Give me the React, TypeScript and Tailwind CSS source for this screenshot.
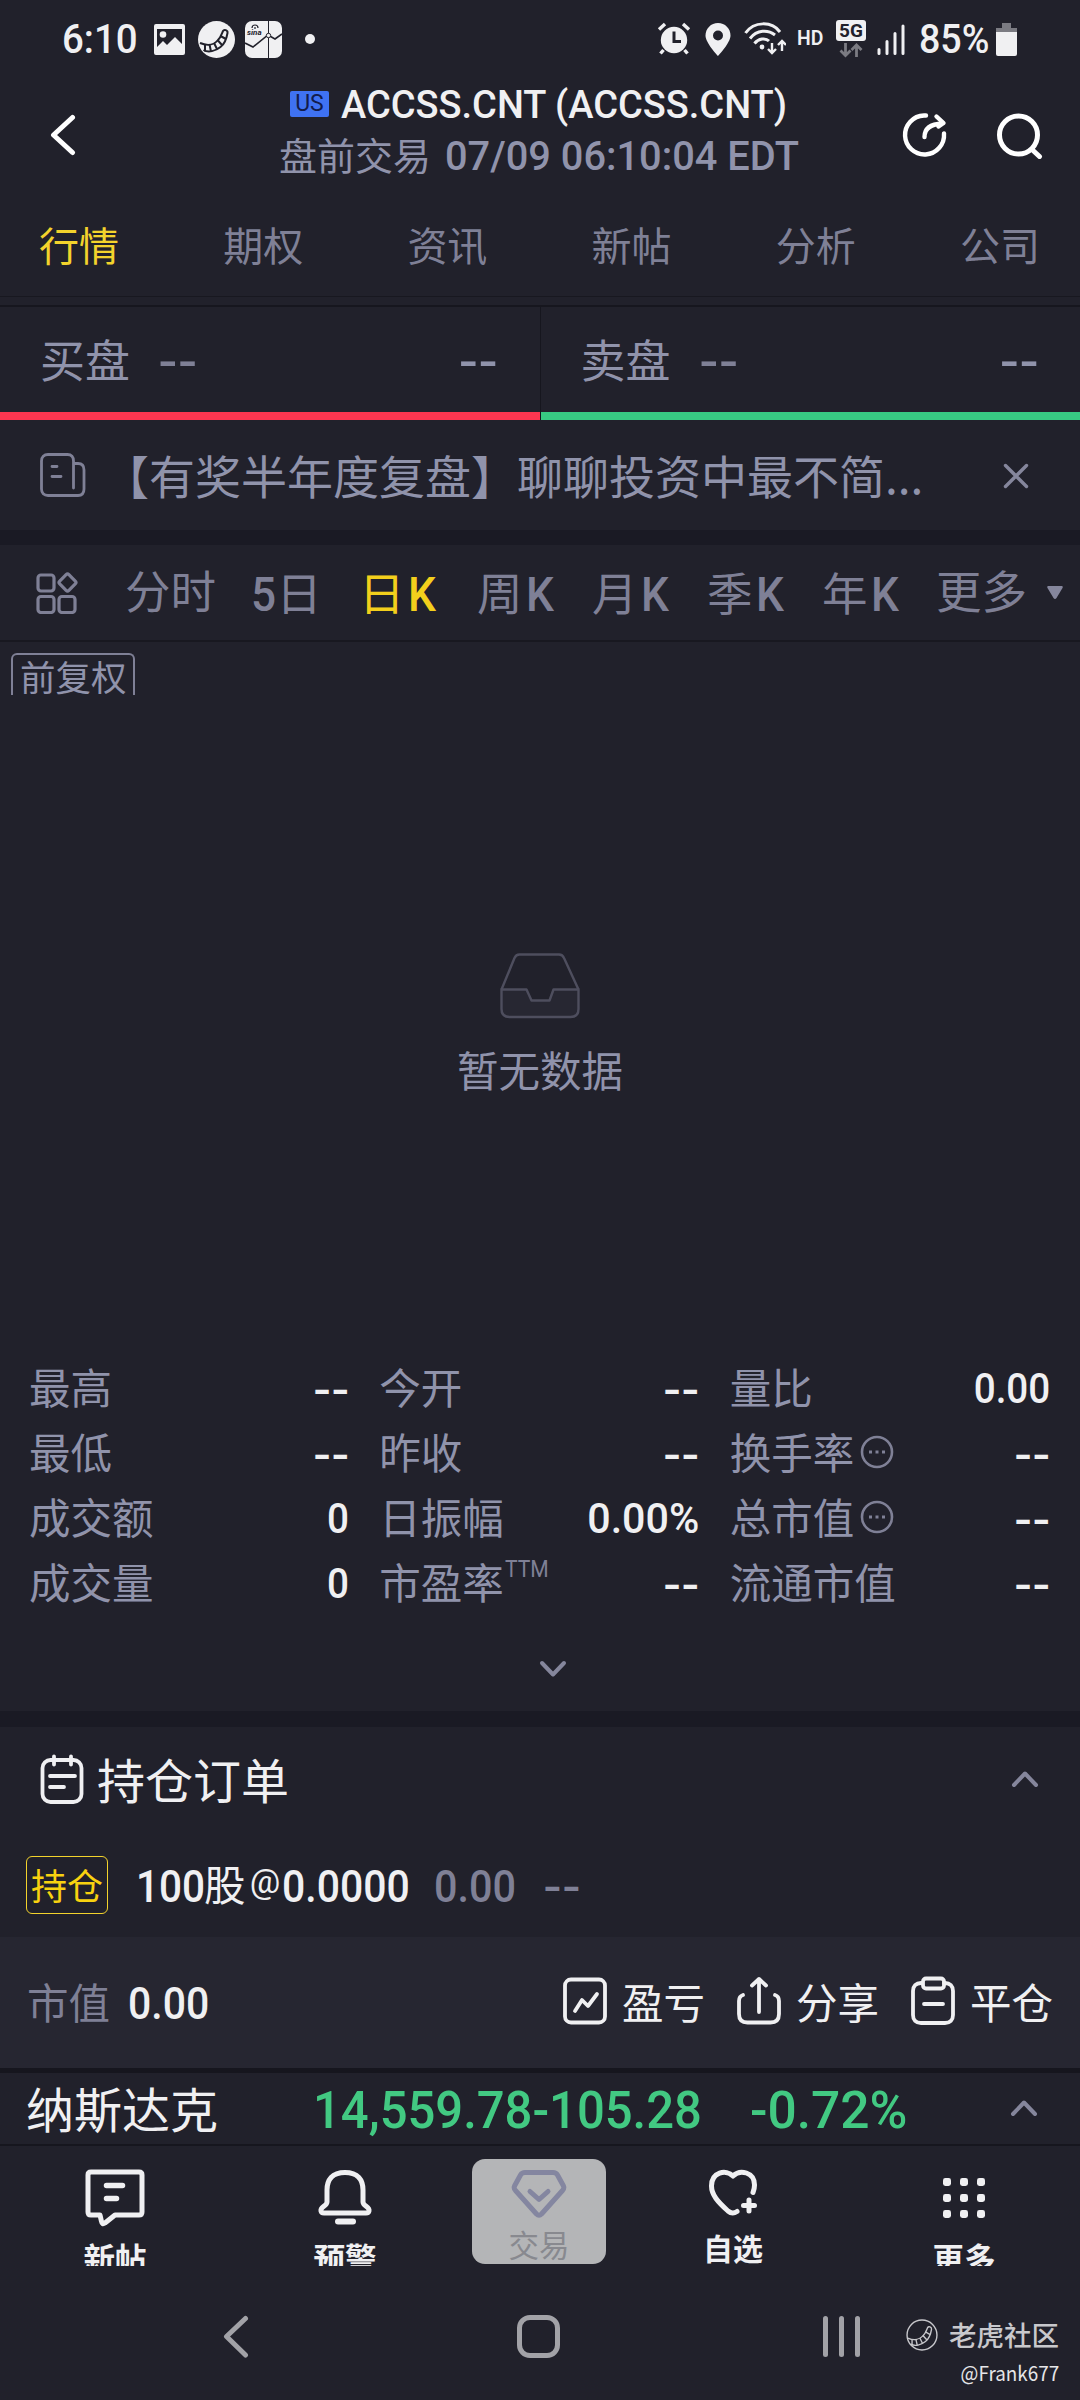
import type { ReactNode } from "react";
import clsx from "clsx";

const NUM =
  "inline-block origin-left whitespace-nowrap font-['Roboto','Noto_Sans_CJK_SC',sans-serif] font-medium leading-none";

function Caret({ down, className }: { down?: boolean; className?: string }) {
  return (
    <svg
      viewBox="0 0 28 18"
      className={clsx("h-[18px] w-[28px] shrink-0", down && "rotate-180", className)}
      fill="none"
      stroke="#85869c"
      strokeWidth="4"
      strokeLinecap="round"
      strokeLinejoin="round"
    >
      <path d="M3 15 14 3.500 25 15" />
    </svg>
  );
}

/** Two short bars used wherever a quote value is missing. */
function Dashes({ className }: { className?: string }) {
  return (
    <span
      className={clsx(
        "inline-block scale-x-[1.2] font-['Roboto',sans-serif] font-semibold leading-none",
        className,
      )}
    >
      --
    </span>
  );
}

function TigerPaw({ stroke, width }: { stroke: string; width: number }) {
  return (
    <g fill="none" stroke={stroke} strokeWidth={width} strokeLinejoin="round">
      <path d="M2 22c7 3 14 2 18-3 3-3 4-7 5-9 1-2 5-1 4.500 2-1 6-3 11-7 14-5 4-12 6-17 3" />
      <path d="M7 23.500v7M11.500 23.500l1.500 7M16 22l3 6M19.500 19l4.500 5M22.500 15l5.500 3" />
    </g>
  );
}

function StatusBar() {
  return (
    <div className="flex h-[78px] items-center pl-[62px] text-[#f0f0f2]">
      <span className="mt-[2px] w-[92px] origin-left scale-x-[0.96] font-['Roboto'] text-[40px] font-medium leading-none">
        6:10
      </span>
      <svg viewBox="0 0 31 31" className="h-[31px] w-[31px]">
        <path
          fill="#f0f0f2"
          fillRule="evenodd"
          d="M2 0h27a2 2 0 0 1 2 2v27a2 2 0 0 1-2 2H2a2 2 0 0 1-2-2V2a2 2 0 0 1 2-2zM3 5v18l6-6 4 4 8-8 7 7V5z"
        />
        <circle cx="9" cy="10.500" r="3.300" fill="#f0f0f2" />
      </svg>
      <svg viewBox="0 0 37 37" className="ml-[13px] h-[37px] w-[37px]">
        <circle cx="18.500" cy="18.500" r="18.500" fill="#f0f0f2" />
        <TigerPaw stroke="#21212b" width={2} />
      </svg>
      <svg viewBox="0 0 37 37" className="ml-[10px] h-[37px] w-[37px]">
        <rect width="37" height="37" rx="7" fill="#f0f0f2" />
        <path d="M23.500 0v37" stroke="#21212b" strokeWidth="1" />
        <path d="m0 22 8 4 15-12 7 4 7-5" fill="none" stroke="#21212b" strokeWidth="1.600" />
        <circle cx="23.500" cy="14.500" r="2.200" fill="#f0f0f2" stroke="#21212b" />
        <path d="M7 7c0-4 6-4 6 0M10 6v2" fill="none" stroke="#21212b" strokeWidth="1.200" />
        <text x="2" y="13.500" fontSize="8" fontStyle="italic" fontWeight="700" fontFamily="Roboto" fill="#21212b">
          sina
        </text>
      </svg>
      <span className="ml-[23px] h-[10px] w-[10px] rounded-full bg-[#f0f0f2]" />

      <svg viewBox="0 0 34 34" className="ml-[342px] h-[34px] w-[34px]">
        <circle cx="17" cy="18" r="13.200" fill="#f0f0f2" />
        <path
          d="M2 7.500 8 2M32 7.500 26 2M6.500 28 3.500 31.500M27.500 28l3 3.500"
          stroke="#f0f0f2"
          strokeWidth="3.400"
        />
        <path d="M17 9.500v10h7" fill="none" stroke="#21212b" strokeWidth="3" />
      </svg>
      <svg viewBox="0 0 26 33" className="ml-[14px] h-[33px] w-[26px]">
        <path
          fill="#f0f0f2"
          fillRule="evenodd"
          d="M13 0c7 0 12.500 5.500 12.500 12.500C25.500 20 13 33 13 33S.5 20 .5 12.500C.5 5.500 6 0 13 0zm0 7.500a5 5 0 1 0 0 10 5 5 0 0 0 0-10z"
        />
      </svg>
      <svg viewBox="0 0 42 34" className="ml-[13px] h-[34px] w-[42px]" fill="none" stroke="#f0f0f2">
        <path d="M1.500 11C10-1 28-1 36 10M6 16.500C13 7.500 24 7.500 31 13M10.500 21.500c4-5 11-6 14.500-2.500" strokeWidth="3" />
        <circle cx="18" cy="25" r="2.400" fill="#f0f0f2" stroke="none" />
        <path d="M28 21v10m-4-4 4 4 4-4M38 29V19m-4 4 4-4 4 4" strokeWidth="2.400" />
      </svg>
      <span className="-mt-[2px] ml-[11px] w-[27px] origin-left scale-x-[0.97] font-['Roboto'] text-[20px] font-semibold leading-none">
        HD
      </span>
      <span className="ml-[12px] flex w-[30px] flex-col items-center">
        <span className="flex h-[21px] w-[30px] items-center justify-center rounded-[3px] bg-[#f0f0f2] font-['Roboto'] text-[19px] font-bold leading-none text-[#21212b]">
          5G
        </span>
        <svg viewBox="0 0 24 15" className="mt-[2px] h-[15px] w-[24px]" fill="none" stroke="#7b7b82" strokeWidth="2.800">
          <path d="M6.500 0v12M1.500 7.500l5 5 5-5M17.500 14V2M12.500 7l5-5 5 5" />
        </svg>
      </span>
      <svg viewBox="0 0 28 31" className="ml-[11px] h-[31px] w-[28px]" stroke="#f0f0f2" strokeWidth="3" strokeLinecap="round">
        <path d="M2 25.500v4M10 17.500v12M18 9.500v20M26 2v27.500" />
      </svg>
      <span className="ml-[14px] mt-[2px] w-[76px] origin-left scale-x-[0.94] whitespace-nowrap font-['Roboto'] text-[40px] font-medium leading-none">
        85%
      </span>
      <svg viewBox="0 0 21 33" className="ml-px h-[33px] w-[21px]">
        <path d="M6 0h9v5h6v4H0V5h6z" fill="#7b7b82" />
        <path d="M0 9h21v22a2 2 0 0 1-2 2H2a2 2 0 0 1-2-2z" fill="#f0f0f2" />
      </svg>
    </div>
  );
}

function Header() {
  return (
    <header className="flex h-[117px] items-start pl-[49px]">
      <svg
        viewBox="0 0 28 42"
        className="mt-[36px] h-[42px] w-[28px]"
        fill="none"
        stroke="#fff"
        strokeWidth="5"
        strokeLinecap="round"
        strokeLinejoin="round"
      >
        <path d="M23.500 3.500 4.500 21l19 17.500" />
      </svg>
      <div className="ml-[202px] flex w-[622px] flex-col">
        <div className="ml-[11px] mt-[5px] flex h-[44px] items-center">
          <span className="-mt-[3px] flex h-[26px] w-[39px] items-center justify-center rounded-[2px] bg-[#3f72f2] font-['Roboto'] text-[23px] leading-none text-[#121c4c]">
            US
          </span>
          <span className="ml-[12px] whitespace-nowrap font-['Roboto'] text-[38px] font-medium leading-none text-[#f0f0f2]">
            ACCSS.CNT (ACCSS.CNT)
          </span>
        </div>
        <div className="flex h-[56px] items-center text-[#9093ab]">
          <span className="-mt-[3px] text-[38px] leading-none">盘前交易</span>
          <span className={clsx(NUM, "ml-[14px] mt-[2px] scale-x-[0.97] text-[41px]")}>07/09 06:10:04 EDT</span>
        </div>
      </div>
      <div className="mt-[33px] flex gap-[46px]">
        <svg viewBox="0 0 48 48" className="h-[48px] w-[48px]" fill="none" stroke="#fff" strokeWidth="4.400" strokeLinecap="round" strokeLinejoin="round">
          <path d="M25 4.500h-2a19.500 19.500 0 1 0 20 18" />
          <path d="M23.500 26c0-8 6-13 18-13.500M35.500 5.500l7 6.500-5 3.500" />
        </svg>
        <svg viewBox="0 0 48 48" className="h-[48px] w-[48px]" fill="none" stroke="#fff" strokeWidth="5" strokeLinecap="round">
          <circle cx="23.500" cy="24" r="19" />
          <path d="m37.500 39 7 6.500" />
        </svg>
      </div>
    </header>
  );
}

const TABS = ["行情", "期权", "资讯", "新帖", "分析", "公司"];

function Tabs() {
  return (
    <nav className="flex h-[102px] items-center justify-between border-b border-[#181820] pb-[4px] pl-[39px] pr-[40px] text-[40px] leading-none text-[#7f8096]">
      {TABS.map((tab, i) => (
        <span key={tab} className={clsx(i === 0 && "text-[#f3d32c]")}>
          {tab}
        </span>
      ))}
    </nav>
  );
}

function BookSide({ label, bar }: { label: string; bar: string }) {
  return (
    <div className="flex flex-1 flex-col">
      <div className="flex h-[105px] items-center pl-[40px] pr-[41px] text-[#9093ab]">
        <span className="-mt-[2px] text-[45px] leading-none">{label}</span>
        <Dashes className="ml-[28px] mt-[3px] origin-left text-[45px] text-[#7f8096]" />
        <Dashes className="ml-auto mt-[3px] origin-right text-[45px]" />
      </div>
      <div className={clsx("h-[8px]", bar)} />
    </div>
  );
}

function Notice() {
  return (
    <div className="flex h-[110px] items-center pl-[40px]">
      <svg viewBox="0 0 46 44" className="h-[44px] w-[46px]" fill="none" stroke="#7f8096" strokeWidth="2.800" strokeLinecap="round" strokeLinejoin="round">
        <path d="M33.500 35V8c0-4-2-6.500-6-6.500H8c-4 0-6.500 2.500-6.500 6.500v28c0 4 2.500 6.500 6.500 6.500h30c4 0 6-2.500 6-6.500V17c0-4-2-6.500-6-6.500h-4" />
        <path d="M12 13.500h5M12 23.500h9" />
      </svg>
      <span className="-mt-[3px] ml-[17px] w-[830px] whitespace-nowrap text-[46px] leading-none text-[#9093ab]">
        【有奖半年度复盘】聊聊投资中最不简...
      </span>
      <svg viewBox="0 0 28 28" className="ml-[69px] mt-[2px] h-[28px] w-[28px]" stroke="#85869c" strokeWidth="3.400" strokeLinecap="round">
        <path d="m3.500 3.500 21 21M24.500 3.500l-21 21" />
      </svg>
    </div>
  );
}

const PERIODS = [
  { label: "分时", width: "w-[126px]" },
  { label: "5日", width: "w-[108px]" },
  { label: "日K", width: "w-[118px]" },
  { label: "周K", width: "w-[115px]" },
  { label: "月K", width: "w-[115px]" },
  { label: "季K", width: "w-[115px]" },
  { label: "年K", width: "w-[114px]" },
  { label: "更多", width: "w-[111px]" },
];

function PeriodBar() {
  return (
    <div className="flex h-[97px] items-center border-b-2 border-[#181820] pl-[36px] text-[#7f8096]">
      <svg viewBox="0 0 42 42" className="h-[42px] w-[42px]" fill="none" stroke="#7f8096" strokeWidth="3.200">
        <rect x="2" y="3" width="16" height="16" rx="3" />
        <rect x="2" y="24.500" width="16" height="16" rx="3" />
        <rect x="23" y="24.500" width="16" height="16" rx="3" />
        <rect x="25" y="4" width="13" height="13" rx="2" transform="rotate(45 31.500 10.500)" />
      </svg>
      <div className="ml-[47px] mt-[4px] flex">
        {PERIODS.map((p) => (
          <span
            key={p.label}
            className={clsx(
              "whitespace-nowrap font-['Roboto','Noto_Sans_CJK_SC',sans-serif] text-[45.500px] leading-none",
              p.width,
              p.label === "日K" && "text-[#f3cf1c]",
            )}
          >
            {[...p.label].map((ch) => (
              <span
                key={ch}
                className={clsx(
                  /[5K]/.test(ch) && "inline-block origin-left scale-x-[0.92] text-[48px] font-medium leading-none",
                  ch === "K" && "ml-[3px]",
                  ch === "5" && "-mr-[2px]",
                )}
              >
                {ch}
              </span>
            ))}
          </span>
        ))}
      </div>
      <svg viewBox="0 0 16 13" className="h-[13px] w-[16px]">
        <path d="M1.500 0h13c1.200 0 1.600 1 1 2L9.500 12c-.8 1.200-2.200 1.200-3 0L.5 2C-.1 1 .3 0 1.500 0z" fill="#85869c" />
      </svg>
    </div>
  );
}

function EmptyChart() {
  return (
    <div className="flex h-[704px] flex-col pt-[11px]">
      <div className="ml-[11px] h-[42px] w-[124px] overflow-hidden rounded-t-[6px] border-2 border-b-0 border-[#7f8096] pl-[7px] pt-[3px] text-[35.500px] leading-[36px] text-[#9093ab]">
        前复权
      </div>
      <div className="mt-[258px] flex flex-col items-center">
        <svg viewBox="0 0 80 66" className="h-[66px] w-[80px]" fill="none" stroke="#4e4e5e" strokeWidth="2.400" strokeLinejoin="round">
          <path d="M1.500 36.500h25l5 11h18l4-11h25V56c0 5-3 8-8 8H9.500c-5 0-8-3-8-8z" fill="#272732" />
          <path d="M1.500 36.500 14.500 5c1-2.500 2-3.500 5-3.500H59c3 0 4 1 5 3.500l14.500 31.500" />
        </svg>
        <span className="mt-[28px] text-[41.500px] leading-[44px] text-[#9093ab]">暂无数据</span>
      </div>
    </div>
  );
}

function MoreDots() {
  return (
    <svg viewBox="0 0 34 34" className="-mt-[3px] ml-[6px] h-[34px] w-[34px]">
      <circle cx="17" cy="17" r="15" fill="none" stroke="#7f8096" strokeWidth="2.600" />
      <path d="M9 15.500h3v3H9zM15.500 15.500h3v3h-3zM22 15.500h3v3h-3z" fill="#7f8096" />
    </svg>
  );
}

type Quote = { label: string; value: string; info?: boolean; sup?: string };

const QUOTES: Quote[] = [
  { label: "最高", value: "--" },
  { label: "今开", value: "--" },
  { label: "量比", value: "0.00" },
  { label: "最低", value: "--" },
  { label: "昨收", value: "--" },
  { label: "换手率", value: "--", info: true },
  { label: "成交额", value: "0" },
  { label: "日振幅", value: "0.00%" },
  { label: "总市值", value: "--", info: true },
  { label: "成交量", value: "0" },
  { label: "市盈率", value: "--", sup: "TTM" },
  { label: "流通市值", value: "--" },
];

function QuoteValue({ value }: { value: string }) {
  if (value === "--") return <Dashes className="mt-[2px] origin-right text-[41.500px]" />;
  return (
    <span
      className={clsx(
        "inline-block origin-right font-['Roboto'] text-[42px] font-medium leading-none",
        value.endsWith("%") ? "scale-x-[0.98]" : "scale-x-[0.92]",
      )}
    >
      {value}
    </span>
  );
}

function QuoteGrid() {
  return (
    <div className="flex h-[365px] flex-col items-center pt-[10px]">
      <dl className="grid w-[1022px] grid-cols-3 gap-x-[29px]">
        {QUOTES.map((q) => (
          <div key={q.label} className="flex h-[65px] items-center">
            <dt className="flex items-center text-[41.500px] leading-none text-[#9093ab]">
              <span className="-mt-[3px]">{q.label}</span>
              {q.info && <MoreDots />}
              {q.sup && (
                <sup className="top-0 -mt-[30px] ml-px origin-left scale-x-[0.88] font-['Roboto'] text-[24px] leading-none text-[#7f8096]">
                  {q.sup}
                </sup>
              )}
            </dt>
            <dd className="ml-auto mr-px flex text-[#f0f0f2]">
              <QuoteValue value={q.value} />
            </dd>
          </div>
        ))}
      </dl>
      <Caret down className="ml-[26px] mt-[44px]" />
    </div>
  );
}

function Action({ label, children }: { label: string; children: ReactNode }) {
  return (
    <span className="flex items-center">
      <svg viewBox="0 0 46 50" className="-mt-[3px] h-[50px] w-[46px]" fill="none" stroke="#f0f0f2" strokeWidth="3.800" strokeLinecap="round" strokeLinejoin="round">
        {children}
      </svg>
      <span className="-mt-[2px] ml-[14px] text-[41.500px] leading-none">{label}</span>
    </span>
  );
}

function Positions() {
  return (
    <section className="text-[#f0f0f2]">
      <div className="flex h-[106px] items-center pl-[40px] pr-[41px]">
        <svg viewBox="0 0 44 50" className="-mt-[3px] h-[50px] w-[44px]" fill="none" stroke="#f0f0f2" strokeWidth="3.800" strokeLinecap="round">
          <rect x="2.500" y="6" width="39" height="42" rx="8" />
          <path d="M14 2.500v8M31 2.500v8M10 22h25M10 33h14" />
        </svg>
        <span className="-mt-[4px] ml-[13px] text-[48px] leading-none">持仓订单</span>
        <Caret className="-mt-[3px] ml-auto" />
      </div>
      <div className="flex h-[104px] items-center pl-[26px]">
        <span className="flex h-[58px] w-[82px] items-center justify-center rounded-[6px] border border-[#f3d32c] pb-[3px] text-[36px] leading-none text-[#f8d210]">
          持仓
        </span>
        <span className={clsx(NUM, "ml-[28px] mt-[2px] w-[68px] scale-x-[0.9] text-[45px]")}>100</span>
        <span className="-mt-[2px] w-[43px] text-[41.500px] leading-none">股</span>
        <span className="-mt-[8px] w-[36px] text-center font-['Roboto'] text-[34px] leading-none">@</span>
        <span className={clsx(NUM, "ml-[-1px] mt-[2px] w-[152px] scale-x-[0.91] text-[45px]")}>0.0000</span>
        <span className={clsx(NUM, "mt-[2px] w-[109px] scale-x-[0.92] text-[45px] text-[#7f8096]")}>0.00</span>
        <Dashes className="mt-[4px] origin-left text-[43px] text-[#7f8096]" />
      </div>
      <div className="flex h-[131px] items-center bg-[#262631] pl-[27px] pr-[27px]">
        <span className="-mt-[2px] text-[41.500px] leading-none text-[#7f8096]">市值</span>
        <span className={clsx(NUM, "ml-[18px] mt-[2px] scale-x-[0.91] text-[45px]")}>0.00</span>
        <div className="ml-auto flex gap-[31px]">
          <Action label="盈亏">
            <rect x="3" y="3.500" width="40" height="43" rx="6" />
            <path d="m13 35 7-11 6 6 9-12" />
          </Action>
          <Action label="分享">
            <path d="M7 19c-3 1-4 3-4 6v13c0 5.500 3 8.500 8.500 8.500h23c5.500 0 8.500-3 8.500-8.500V25c0-3-1-5-4-6M23 36V3M16 9.500 23 3l7 6.500" />
          </Action>
          <Action label="平仓">
            <path d="M12 7h-1c-5 0-8 3-8 8v24c0 5 3 8 8 8h24c5 0 8-3 8-8V15c0-5-3-8-8-8h-1M14 28h19" />
            <rect x="13" y="2.500" width="21" height="10" rx="3" />
          </Action>
        </div>
      </div>
    </section>
  );
}

function IndexTicker() {
  return (
    <div className="flex h-[73px] items-center border-b-2 border-[#16161e] pl-[26px]">
      <span className="-mt-[4px] w-[287px] text-[48px] leading-none text-[#f0f0f2]">纳斯达克</span>
      <span className={clsx(NUM, "mt-[5px] w-[437px] scale-x-[0.942] text-[52px] text-[#42c982]")}>14,559.78-105.28</span>
      <span className={clsx(NUM, "mt-[5px] w-[260px] scale-x-[0.99] text-[52px] text-[#42c982]")}>-0.72%</span>
      <Caret className="-mt-[2px]" />
    </div>
  );
}

function NavItem({ label, className, children }: { label: string; className: string; children: ReactNode }) {
  return (
    <div className={clsx("flex h-[120px] shrink-0 flex-col items-center overflow-hidden pt-[21px]", className)}>
      <svg viewBox="0 0 60 60" className="h-[60px] w-[60px] shrink-0" fill="none" stroke="#f0f0f2" strokeWidth="5" strokeLinecap="round" strokeLinejoin="round">
        {children}
      </svg>
      <span className="mt-[13px] h-[26px] overflow-hidden text-[31.500px] font-bold leading-[34px] text-[#f0f0f2]">{label}</span>
    </div>
  );
}

const DOT_X = [9, 26, 43];
const DOT_Y = [11, 27, 43];

function BottomNav() {
  return (
    <nav className="flex h-[120px]">
      <NavItem label="新帖" className="w-[230px]">
        <path d="M6 5h48q3 0 3 3v37q0 3-3 3H30l-10 8q-3 2-3.500-1.500L15 48H6q-3 0-3-3V8q0-3 3-3z" />
        <path d="M21.500 18.500h16M21.500 31.500h10" strokeWidth="5.500" />
      </NavItem>
      <NavItem label="预警" className="w-[230px]">
        <path d="M30 5.500C17 5.500 12 13 12 23v12c0 4-7 5-6 9 .3 1.500 1 2 3 2h42c2 0 2.700-.5 3-2 1-4-6-5-6-9V23c0-10-5-17.500-18-17.500z" />
        <path d="M23 54.500h15" strokeWidth="6" />
      </NavItem>
      <div className="ml-[12px] mt-[13px] flex h-[105px] w-[134px] flex-col items-center rounded-[13px] bg-[#b4b5b7]">
        <svg viewBox="0 0 56 52" className="mt-[10px] h-[52px] w-[56px]" fill="none" stroke="#8486a0" strokeWidth="5" strokeLinecap="round" strokeLinejoin="round">
          <path d="M14 3.500h28q3 0 4.500 2.500l6 11q1 2-1 4.500L30.500 45q-2.500 2.500-5 0L4.500 21.500q-2-2.500-1-4.500l6-11Q11 3.500 14 3.500z" />
          <path d="m19 22.500 9 8 9-8" />
        </svg>
        <span className="mt-[4px] text-[30.500px] leading-[38px] text-[#88898f]">交易</span>
      </div>
      <div className="ml-[27px] flex w-[200px] flex-col items-center pt-[22px]">
        <svg viewBox="0 0 52 50" className="h-[50px] w-[52px]" fill="none" stroke="#f0f0f2" strokeWidth="5" strokeLinecap="round" strokeLinejoin="round">
          <path d="M30 43.500c-3 2-6 2-9-.5C11 34 4.500 27 4.500 18 4.500 4 19 1 26 8 33 1 47.500 4 47.500 17c0 3-.5 5-1.500 7.500" />
          <path d="M42 32v11M36.500 37.500h11" strokeWidth="5" />
        </svg>
        <span className="mt-[10px] text-[30px] font-bold leading-[38px] text-[#f0f0f2]">自选</span>
      </div>
      <NavItem label="更多" className="ml-[31px] w-[200px]">
        {DOT_Y.map((y) =>
          DOT_X.map((x) => (
            <rect key={`${x}-${y}`} x={x} y={y} width="8" height="8" rx="2.400" fill="#f0f0f2" stroke="none" />
          )),
        )}
      </NavItem>
    </nav>
  );
}

function SystemNav() {
  return (
    <div className="flex h-[133px] items-start pl-[222px] pt-[49px]">
      <svg viewBox="0 0 28 44" className="h-[44px] w-[28px]" fill="none" stroke="#a2a2a7" strokeWidth="5" strokeLinecap="round" strokeLinejoin="round">
        <path d="M23.500 3.500 4.500 21.500l19 18.500" />
      </svg>
      <span className="ml-[267px] h-[43px] w-[43px] rounded-[13px] border-[5.500px] border-[#a2a2a7]" />
      <span className="ml-[263px] mt-[1px] flex h-[41px] w-[37px] justify-between">
        <span className="w-[5px] rounded-full bg-[#a2a2a7]" />
        <span className="w-[5px] rounded-full bg-[#a2a2a7]" />
        <span className="w-[5px] rounded-full bg-[#a2a2a7]" />
      </span>
      <div className="ml-[46px] flex w-[153px] flex-col items-end">
        <div className="flex h-[40px] w-[153px] items-center">
          <svg viewBox="0 0 37 37" className="h-[32px] w-[32px]">
            <circle cx="18.500" cy="18.500" r="17.300" fill="none" stroke="#c8c8cc" strokeWidth="1.600" />
            <TigerPaw stroke="#c8c8cc" width={1.6} />
          </svg>
          <span className="ml-[11px] whitespace-nowrap text-[27.500px] font-medium leading-none text-[#c8c8cc]">老虎社区</span>
        </div>
        <span className="mt-[2px] origin-right scale-x-[0.92] text-[20.500px] leading-[30px] text-[#e6e6e8]">@Frank677</span>
      </div>
    </div>
  );
}

export default function App() {
  return (
    <main
      lang="zh-CN"
      className="flex h-[2400px] w-[1080px] flex-col overflow-hidden bg-[#21212b] font-['Noto_Sans_CJK_SC',sans-serif]"
    >
      <StatusBar />
      <Header />
      <Tabs />
      <div className="mt-[8px] flex divide-x divide-[#16161e] border-t-2 border-[#16161e]">
        <BookSide label="买盘" bar="bg-[#fd3650]" />
        <BookSide label="卖盘" bar="bg-[#37cb83]" />
      </div>
      <Notice />
      <div className="h-[15px] bg-[#1a1a24]" />
      <PeriodBar />
      <EmptyChart />
      <QuoteGrid />
      <div className="h-[16px] bg-[#1a1a24]" />
      <Positions />
      <div className="h-[5px] bg-[#16161e]" />
      <IndexTicker />
      <BottomNav />
      <SystemNav />
    </main>
  );
}
